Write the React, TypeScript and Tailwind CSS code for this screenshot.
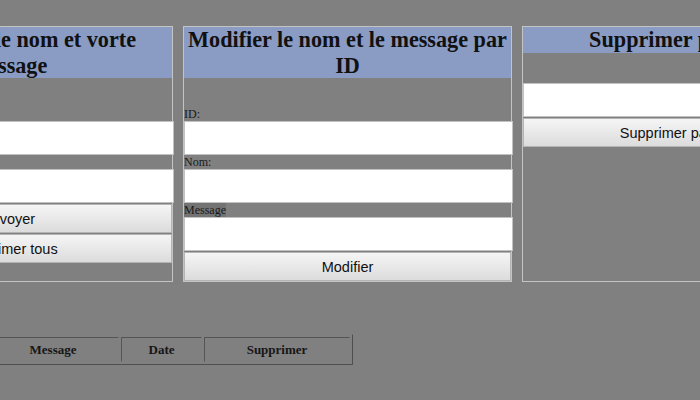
import React from "react";

const serif = { fontFamily: '"Liberation Serif", "Times New Roman", serif' };
const sans = { fontFamily: '"Liberation Sans", Arial, sans-serif' };

function Header({ children }: { children: React.ReactNode }) {
  return (
    <h2
      style={serif}
      className="m-0 bg-[#8a9cc4] text-center text-[22.2px] font-bold leading-[25.5px] text-[#111]"
    >
      {children}
    </h2>
  );
}

function Label({ children, shade }: { children: React.ReactNode; shade?: boolean }) {
  return (
    <div style={serif} className="text-[12px] leading-[14px] text-[#1a1a1a]">
      <span className={shade ? "bg-[#737373]" : ""}>{children}</span>
    </div>
  );
}

function Input() {
  return (
    <input
      type="text"
      className="block h-[34px] w-[calc(100%+2px)] border border-[#c2c2c2] bg-white outline-none"
    />
  );
}

function Button({ children }: { children: React.ReactNode }) {
  return (
    <button
      style={sans}
      className="mt-[1px] block h-[29px] w-full border border-[#b4b4b4] bg-gradient-to-b from-[#f5f5f5] to-[#dcdcdc] text-center text-[14.5px] leading-[28px] text-[#111]"
    >
      {children}
    </button>
  );
}

function Panel({ width, children }: { width: string; children: React.ReactNode }) {
  return (
    <div className={`${width} shrink-0 border border-[#c4c4c4] bg-[#808080]`}>{children}</div>
  );
}

export default function App() {
  return (
    <div className="h-[400px] w-[700px] overflow-hidden bg-[#808080]">
      <div className="ml-[-156px] flex items-stretch gap-[10px] pt-[26px]">
        <Panel width="w-[329px]">
          <Header>Enregistrer le nom et vorte message</Header>
          <div className="pt-[29px]">
            <Label>Nom:</Label>
            <Input />
            <Label>Message</Label>
            <Input />
            <Button>Envoyer</Button>
            <Button>Supprimer tous</Button>
          </div>
        </Panel>
        <Panel width="w-[329px]">
          <Header>Modifier le nom et le message par ID</Header>
          <div className="pt-[29px]">
            <Label>ID:</Label>
            <Input />
            <Label>Nom:</Label>
            <Input />
            <Label shade>Message</Label>
            <Input />
            <Button>Modifier</Button>
          </div>
        </Panel>
        <Panel width="w-[306px]">
          <Header>Supprimer par ID</Header>
          <div className="pt-[30px]">
            <Input />
            <Button>Supprimer par ID</Button>
          </div>
        </Panel>
      </div>

      <table
        style={serif}
        className="ml-[-160px] mt-[52px] border-separate border-spacing-[2px] border border-t-[#808080] border-l-[#808080] border-r-[#4f4f4f] border-b-[#4f4f4f]"
      >
        <thead>
          <tr>
            {[
              ["ID", "w-[40px]"],
              ["Nom", "w-[100px]"],
              ["Message", "w-[132px]"],
              ["Date", "w-[81px]"],
              ["Supprimer", "w-[146px]"],
            ].map(([t, w]) => (
              <th
                key={t}
                className={`${w} border border-t-[#555] border-l-[#555] border-r-[#808080] border-b-[#808080] p-0 py-[4px] text-center text-[13px] font-bold leading-[15px] text-[#161616]`}
              >
                {t}
              </th>
            ))}
          </tr>
        </thead>
      </table>
    </div>
  );
}
